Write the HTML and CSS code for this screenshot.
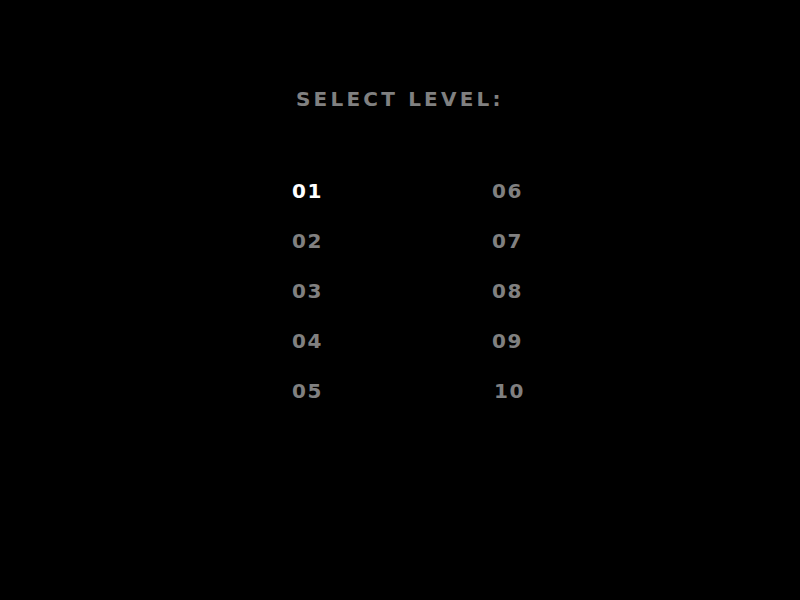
FILE: index.html
```html
<!DOCTYPE html>
<html lang="en">
<head>
  <meta charset="UTF-8">
  <meta name="viewport" content="width=device-width, initial-scale=1.0">
  <title>Select Level</title>
  <link rel="stylesheet" href="styles.css">
</head>
<body>
  <div class="screen">
    <h1 class="title">SELECT LEVEL:</h1>

    <ul class="levels">
      <li class="level selected">01</li>
      <li class="level">06</li>
      <li class="level">02</li>
      <li class="level">07</li>
      <li class="level">03</li>
      <li class="level">08</li>
      <li class="level">04</li>
      <li class="level">09</li>
      <li class="level">05</li>
      <li class="level ten">10</li>
    </ul>
  </div>
</body>
</html>
```

FILE: styles.css
```css
body {
  margin: 0;
  background: #000;
  font-family: "DejaVu Sans", sans-serif;
  font-weight: bold;
}
.screen {
  width: 800px;
  height: 600px;
  padding-top: 89px;
  box-sizing: border-box;
}
.title {
  margin: 0 0 0 296px;
  font-size: 20px;
  line-height: 20px;
  letter-spacing: 3.2px;
  color: #808080;
  font-weight: bold;
}
.levels {
  list-style: none;
  margin: 72px 0 0 292px;
  padding: 0;
  display: grid;
  grid-template-columns: 200px 60px;
  row-gap: 30px;
}
.level {
  font-size: 20px;
  line-height: 20px;
  letter-spacing: 1.5px;
  color: #808080;
}
.level.selected {
  color: #fff;
}
.level.ten {
  padding-left: 2px;
}
```
